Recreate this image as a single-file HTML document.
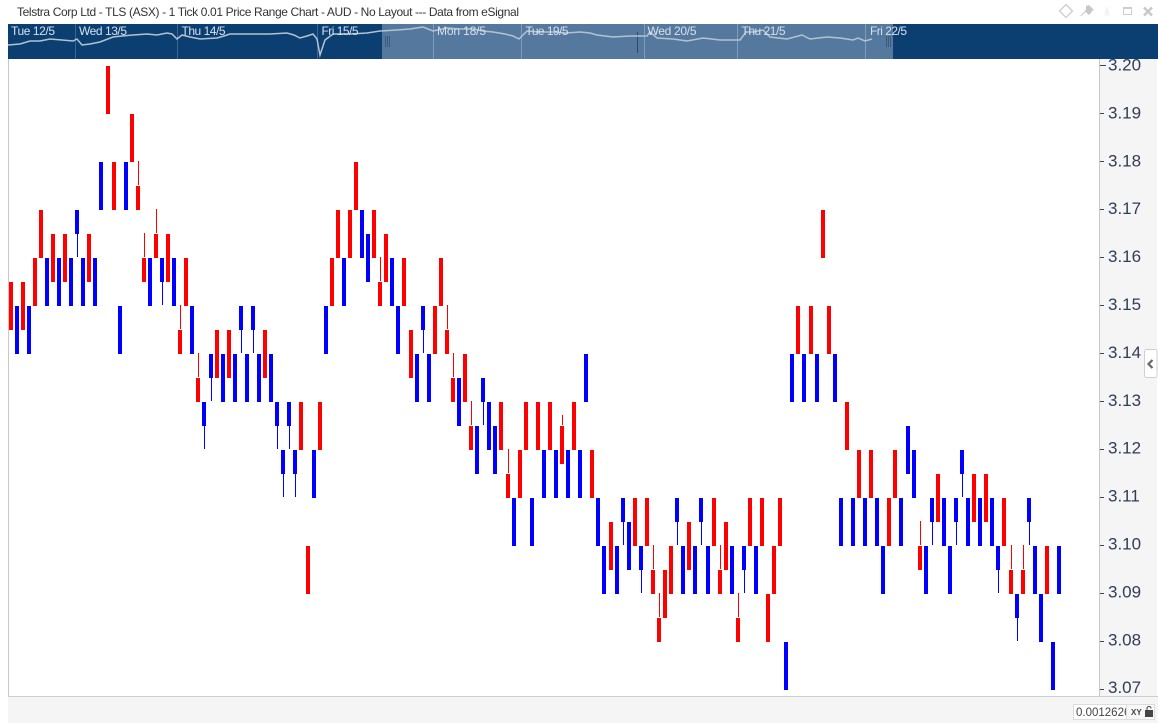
<!DOCTYPE html>
<html>
<head>
<meta charset="utf-8">
<title>Telstra Corp Ltd - TLS (ASX) Price Range Chart</title>
<style>
html,body{margin:0;padding:0;background:#fff;width:1158px;height:723px;overflow:hidden}
svg{display:block;position:absolute;left:0;top:0}
text{font-family:"Liberation Sans",sans-serif}
.t{font-size:12px;fill:#d6e0ea}
.p{font-size:17px;fill:#2f3d58}
</style>
</head>
<body>
<svg width="1158" height="723" viewBox="0 0 1158 723" xmlns="http://www.w3.org/2000/svg">
<rect width="1158" height="723" fill="#fff"/>
<!-- title -->
<text x="17" y="16" font-size="12" fill="#333" textLength="502" lengthAdjust="spacing">Telstra Corp Ltd - TLS (ASX) - 1 Tick 0.01 Price Range Chart - AUD - No Layout --- Data from eSignal</text>
<!-- window icons -->
<g fill="none" stroke="#cdcdcd">
<path d="M1066 4.5l6.5 6.5-6.5 6.5-6.5-6.5z" stroke-width="1.3"/>
<path d="M1123.5 7.5h8v7h-8z" stroke-width="1"/>
<path d="M1123 8h9" stroke-width="2"/>
<path d="M1144 7.5l8 8M1152 7.5l-8 8" stroke-width="2.4" stroke="#c8c8c8"/>
</g>
<path d="M1086 6l3-1 5 5-2 1-2 3-1 1-5-4 2-1zM1084 12l-4 4 1 0 4-3z" fill="#c8c8c8"/>
<path d="M1107 7v1M1106 9h2v1h-2zM1106 11h2v1h-2zM1105 13h4v2h-4z" stroke="#ececec" stroke-width=".7" fill="none"/>
<!-- navigator -->
<rect x="8" y="24" width="1150" height="35" fill="#0b3e71"/>
<rect x="382" y="24" width="511" height="35" fill="#55799e"/>
<path d="M75.5 24v35M177.5 24v35M317.5 24v35" stroke="#3b668f" stroke-width="1"/>
<path d="M433.5 24v35M521.5 24v35M644.5 24v35M737.5 24v35M865.5 24v35" stroke="#7f9cba" stroke-width="1"/>
<path d="M637.5 32v21" stroke="#2c4a6a" stroke-width="1"/>
<polyline fill="none" stroke="#b4c2d0" stroke-width="1.5" points="8,45 20,44 30,41 40,41 50,39 62,40 73,41 77,39 82,45 90,44 100,42 113,37 122,36 133,35 147,34 157,35 167,33 172,34 177,39 182,35 190,37 200,39 217,38 224,36 230,34 253,34 270,34 287,33 294,35 300,38 307,36 313,34 317,39 320,55 325,40 333,34 350,34 367,33 380,31 397,30 410,29 423,27 433,31 447,28 460,29 473,29 483,31 493,32 505,34 513,36 519,39 527,31 540,32 553,32 566,33 580,32 590,33 597,35 613,37 630,36 647,36 650,32 657,38 673,39 687,41 703,38 720,40 740,40 746,32 753,32 763,30 770,37 787,39 802,35 810,39 827,37 840,38 853,40 858,38 865,41 872,39"/>
<path d="M385.5 36v11M387.5 36v11M389.5 36v11M886.5 36v11M888.5 36v11M890.5 36v11" stroke="#3d5a78" stroke-width="1"/>
<g class="lbl">
<text class="t" x="11" y="35" textLength="44">Tue 12/5</text>
<text class="t" x="79" y="35" textLength="48">Wed 13/5</text>
<text class="t" x="181.5" y="35" textLength="44">Thu 14/5</text>
<text class="t" x="321.5" y="35" textLength="37">Fri 15/5</text>
<text class="t" x="437" y="35" textLength="49">Mon 18/5</text>
<text class="t" x="525.5" y="35" textLength="43">Tue 19/5</text>
<text class="t" x="647.5" y="35" textLength="49">Wed 20/5</text>
<text class="t" x="741.5" y="35" textLength="44">Thu 21/5</text>
<text class="t" x="870" y="35" textLength="37">Fri 22/5</text>
</g>
<!-- frame -->
<rect x="8" y="59" width="1" height="637" fill="#c8c8c8"/>
<rect x="1099" y="59" width="58" height="637" fill="#f5f5f5"/>
<rect x="1099" y="59" width="1" height="637" fill="#c8c8c8"/>
<rect x="8" y="696" width="1150" height="27" fill="#f5f5f5"/>
<rect x="8" y="696" width="1150" height="1" fill="#cfcfcf"/>
<!-- red bodies -->
<path fill="#ff0000" d="M9 282h4V330h-4zM21 282h4V330h-4zM33 258h4V306h-4zM39 210h4V258h-4zM51 234h4V282h-4zM63 234h4V282h-4zM87 234h4V282h-4zM106 66h4V114h-4zM112 162h4V210h-4zM130 114h4V162h-4zM136 186h4V210h-4zM142 258h4V282h-4zM154 234h4V258h-4zM166 234h4V282h-4zM178 330h4V354h-4zM184 258h4V306h-4zM196 378h4V402h-4zM215 330h4V378h-4zM227 330h4V378h-4zM263 330h4V378h-4zM299 402h4V450h-4zM306 546h4V594h-4zM318 402h4V450h-4zM330 258h4V306h-4zM336 210h4V258h-4zM348 210h4V258h-4zM354 162h4V210h-4zM372 210h4V258h-4zM378 282h4V306h-4zM384 234h4V282h-4zM402 258h4V306h-4zM409 330h4V378h-4zM433 306h4V354h-4zM439 258h4V306h-4zM445 330h4V354h-4zM451 378h4V402h-4zM463 354h4V402h-4zM469 426h4V450h-4zM499 402h4V450h-4zM506 474h4V498h-4zM518 450h4V498h-4zM524 402h4V450h-4zM536 402h4V450h-4zM548 402h4V450h-4zM560 426h4V464h-4zM572 402h4V450h-4zM590 450h4V498h-4zM609 522h4V570h-4zM633 498h4V546h-4zM645 498h4V546h-4zM651 570h4V594h-4zM657 618h4V642h-4zM663 570h4V618h-4zM669 546h4V594h-4zM687 522h4V570h-4zM712 498h4V546h-4zM718 570h4V594h-4zM724 522h4V570h-4zM736 618h4V642h-4zM748 498h4V546h-4zM760 498h4V546h-4zM766 594h4V642h-4zM772 546h4V594h-4zM778 498h4V546h-4zM796 306h4V354h-4zM809 306h4V354h-4zM821 210h4V258h-4zM827 306h4V354h-4zM845 402h4V450h-4zM857 450h4V498h-4zM869 450h4V498h-4zM887 498h4V546h-4zM893 450h4V498h-4zM918 546h4V570h-4zM936 474h4V522h-4zM972 474h4V522h-4zM984 474h4V522h-4zM1002 498h4V546h-4zM1009 570h4V594h-4zM1021 570h4V594h-4zM1045 546h4V594h-4z"/>
<!-- red wicks -->
<path fill="#ff0000" d="M138 161h1V185h-1zM144 233h1V257h-1zM156 209h1V233h-1zM180 305h1V329h-1zM198 353h1V377h-1zM380 257h1V281h-1zM447 305h1V329h-1zM453 353h1V377h-1zM471 401h1V425h-1zM508 449h1V473h-1zM562 415h1V425h-1zM653 545h1V569h-1zM659 593h1V617h-1zM720 545h1V569h-1zM738 593h1V617h-1zM920 521h1V545h-1zM1011 545h1V569h-1zM1023 545h1V569h-1z"/>
<!-- blue bodies -->
<path fill="#0000ff" d="M15 306h4V354h-4zM27 306h4V354h-4zM45 258h4V306h-4zM57 258h4V306h-4zM69 258h4V306h-4zM75 210h4V234h-4zM81 258h4V306h-4zM93 258h4V306h-4zM99 162h4V210h-4zM118 306h4V354h-4zM124 162h4V210h-4zM148 258h4V306h-4zM160 258h4V282h-4zM172 258h4V306h-4zM190 306h4V354h-4zM202 402h4V426h-4zM209 354h4V378h-4zM221 354h4V402h-4zM233 354h4V402h-4zM239 306h4V330h-4zM245 354h4V402h-4zM251 306h4V330h-4zM257 354h4V402h-4zM269 354h4V402h-4zM275 402h4V426h-4zM281 450h4V474h-4zM287 402h4V426h-4zM293 450h4V474h-4zM312 450h4V498h-4zM324 306h4V354h-4zM342 258h4V306h-4zM360 210h4V258h-4zM366 234h4V282h-4zM390 258h4V306h-4zM396 306h4V354h-4zM415 354h4V402h-4zM421 306h4V330h-4zM427 354h4V402h-4zM457 378h4V426h-4zM475 426h4V474h-4zM481 378h4V402h-4zM487 402h4V450h-4zM493 426h4V474h-4zM512 498h4V546h-4zM530 498h4V546h-4zM542 450h4V498h-4zM554 450h4V498h-4zM566 450h4V498h-4zM578 450h4V498h-4zM584 354h4V402h-4zM596 498h4V546h-4zM602 546h4V594h-4zM615 546h4V594h-4zM621 498h4V522h-4zM627 522h4V570h-4zM639 546h4V570h-4zM675 498h4V522h-4zM681 546h4V594h-4zM693 546h4V594h-4zM699 498h4V522h-4zM706 546h4V594h-4zM730 546h4V594h-4zM742 546h4V570h-4zM754 546h4V594h-4zM784 642h4V690h-4zM790 354h4V402h-4zM802 354h4V402h-4zM815 354h4V402h-4zM833 354h4V402h-4zM839 498h4V546h-4zM851 498h4V546h-4zM863 498h4V546h-4zM875 498h4V546h-4zM881 546h4V594h-4zM899 498h4V546h-4zM906 426h4V474h-4zM912 450h4V498h-4zM924 546h4V594h-4zM930 498h4V522h-4zM942 498h4V546h-4zM948 546h4V594h-4zM954 498h4V522h-4zM960 450h4V474h-4zM966 498h4V546h-4zM978 498h4V546h-4zM990 498h4V546h-4zM996 546h4V570h-4zM1015 594h4V618h-4zM1027 498h4V522h-4zM1033 546h4V594h-4zM1039 594h4V642h-4zM1051 642h4V690h-4zM1057 546h4V594h-4z"/>
<!-- blue wicks -->
<path fill="#0000ff" d="M77 234h1V257h-1zM162 282h1V305h-1zM204 426h1V449h-1zM211 378h1V401h-1zM241 330h1V353h-1zM253 330h1V353h-1zM277 426h1V449h-1zM283 474h1V497h-1zM289 426h1V449h-1zM295 474h1V497h-1zM423 330h1V353h-1zM483 402h1V425h-1zM623 522h1V545h-1zM641 570h1V593h-1zM677 522h1V545h-1zM701 522h1V545h-1zM744 570h1V593h-1zM932 522h1V545h-1zM956 522h1V545h-1zM962 474h1V497h-1zM998 570h1V593h-1zM1017 618h1V641h-1zM1029 522h1V545h-1z"/>
<!-- axis ticks -->
<path stroke="#444" stroke-width="1" d="M1100 65.5h6M1100 113.5h4M1100 161.5h4M1100 209.5h4M1100 257.5h4M1100 305.5h4M1100 353.5h4M1100 401.5h4M1100 449.5h4M1100 497.5h4M1100 545.5h4M1100 593.5h4M1100 641.5h4M1100 689.5h4"/>
<!-- axis labels -->
<text class="p" x="1108" y="70.5">3.20</text>
<text class="p" x="1108" y="118.4">3.19</text>
<text class="p" x="1108" y="166.3">3.18</text>
<text class="p" x="1108" y="214.2">3.17</text>
<text class="p" x="1108" y="262.1">3.16</text>
<text class="p" x="1108" y="310">3.15</text>
<text class="p" x="1108" y="357.9">3.14</text>
<text class="p" x="1108" y="405.8">3.13</text>
<text class="p" x="1108" y="453.7">3.12</text>
<text class="p" x="1108" y="501.6">3.11</text>
<text class="p" x="1108" y="549.5">3.10</text>
<text class="p" x="1108" y="597.4">3.09</text>
<text class="p" x="1108" y="645.3">3.08</text>
<text class="p" x="1108" y="693.2">3.07</text>
<!-- side handle -->
<rect x="1144.5" y="349.5" width="12.5" height="28" rx="2" fill="#fff" stroke="#cfcfcf"/>
<path d="M1152.5 360l-4 4 4 4" fill="none" stroke="#666" stroke-width="2.2"/>
<!-- bottom input -->
<rect x="1073.5" y="704.5" width="81" height="15" fill="#fff" stroke="#ddd"/>
<rect x="1126" y="705" width="28" height="14" fill="#f7f7f7"/>
<path d="M1126.5 705v14" stroke="#ddd"/>
<svg x="1074" y="705" width="52" height="14" viewBox="1074 705 52 14"><text x="1076" y="716" font-size="11.5" fill="#444">0.00126268</text></svg>
<text x="1131" y="715" font-size="8" font-weight="bold" fill="#444">XY</text>
<rect x="1145" y="710" width="8" height="7" fill="#444"/>
<path d="M1147 710v-1.5q0-2 2-2t2 2" fill="none" stroke="#555" stroke-width="1.1"/>
</svg>
</body>
</html>
